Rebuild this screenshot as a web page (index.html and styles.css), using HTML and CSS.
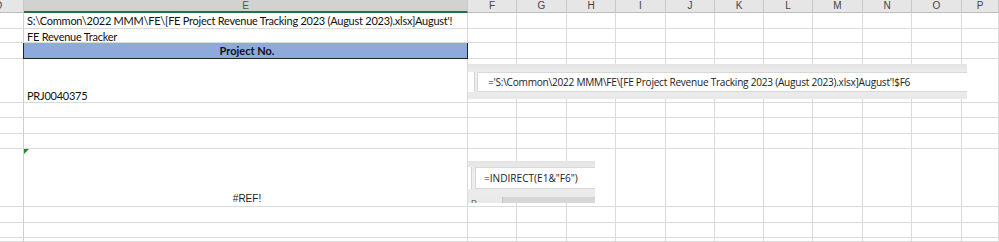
FILE: index.html
```html
<!DOCTYPE html>
<html lang="en">
<head>
  <meta charset="UTF-8">
  <meta name="viewport" content="width=device-width, initial-scale=1.0">
  <title>FE Revenue Tracker</title>
  <link rel="stylesheet" href="styles.css">
</head>
<body>
  <div class="sheet">

    <!-- column headers -->
    <div class="c h first">D</div><div class="c h sel">E</div><div class="c h">F</div><div class="c h">G</div><div class="c h">H</div><div class="c h">I</div><div class="c h">J</div><div class="c h">K</div><div class="c h">L</div><div class="c h">M</div><div class="c h">N</div><div class="c h">O</div><div class="c h">P</div>

    <!-- row 1 -->
    <div class="c"></div><div class="c e txt">S:\Common\2022 MMM\FE\[FE Project Revenue Tracking 2023 (August 2023).xlsx]August'!</div><div class="c"></div><div class="c"></div><div class="c"></div><div class="c"></div><div class="c"></div><div class="c"></div><div class="c"></div><div class="c"></div><div class="c"></div><div class="c"></div><div class="c"></div>

    <!-- row 2 -->
    <div class="c"></div><div class="c e txt">FE Revenue Tracker</div><div class="c"></div><div class="c"></div><div class="c"></div><div class="c"></div><div class="c"></div><div class="c"></div><div class="c"></div><div class="c"></div><div class="c"></div><div class="c"></div><div class="c"></div>

    <!-- row 3 -->
    <div class="c"></div><div class="c e txt title">Project No.</div><div class="c"></div><div class="c"></div><div class="c"></div><div class="c"></div><div class="c"></div><div class="c"></div><div class="c"></div><div class="c"></div><div class="c"></div><div class="c"></div><div class="c"></div>

    <!-- row 4 -->
    <div class="c"></div><div class="c e txt bottom">PRJ0040375</div><div class="c"></div><div class="c"></div><div class="c"></div><div class="c"></div><div class="c"></div><div class="c"></div><div class="c"></div><div class="c"></div><div class="c"></div><div class="c"></div><div class="c"></div>

    <!-- rows 5-7 -->
    <div class="c"></div><div class="c e"></div><div class="c"></div><div class="c"></div><div class="c"></div><div class="c"></div><div class="c"></div><div class="c"></div><div class="c"></div><div class="c"></div><div class="c"></div><div class="c"></div><div class="c"></div>
    <div class="c"></div><div class="c e"></div><div class="c"></div><div class="c"></div><div class="c"></div><div class="c"></div><div class="c"></div><div class="c"></div><div class="c"></div><div class="c"></div><div class="c"></div><div class="c"></div><div class="c"></div>
    <div class="c"></div><div class="c e"></div><div class="c"></div><div class="c"></div><div class="c"></div><div class="c"></div><div class="c"></div><div class="c"></div><div class="c"></div><div class="c"></div><div class="c"></div><div class="c"></div><div class="c"></div>

    <!-- row 8 -->
    <div class="c"></div><div class="c e txt bottom center err"><span class="flag"></span>#REF!</div><div class="c"></div><div class="c"></div><div class="c"></div><div class="c"></div><div class="c"></div><div class="c"></div><div class="c"></div><div class="c"></div><div class="c"></div><div class="c"></div><div class="c"></div>

    <!-- rows 9-11 -->
    <div class="c"></div><div class="c e"></div><div class="c"></div><div class="c"></div><div class="c"></div><div class="c"></div><div class="c"></div><div class="c"></div><div class="c"></div><div class="c"></div><div class="c"></div><div class="c"></div><div class="c"></div>
    <div class="c"></div><div class="c e"></div><div class="c"></div><div class="c"></div><div class="c"></div><div class="c"></div><div class="c"></div><div class="c"></div><div class="c"></div><div class="c"></div><div class="c"></div><div class="c"></div><div class="c"></div>
    <div class="c"></div><div class="c e"></div><div class="c"></div><div class="c"></div><div class="c"></div><div class="c"></div><div class="c"></div><div class="c"></div><div class="c"></div><div class="c"></div><div class="c"></div><div class="c"></div><div class="c"></div>

    <!-- pasted formula bar snippets -->
    <div class="fbar fbar-long">
      <div class="namebox"></div>
      <div class="formula">='S:\Common\2022 MMM\FE\[FE Project Revenue Tracking 2023 (August 2023).xlsx]August'!$F6</div>
    </div>

    <div class="fbar fbar-short">
      <div class="namebox"></div>
      <div class="formula">=INDIRECT(E1&amp;"F6")</div>
      <div class="fbar-foot"><span class="col-d">D</span><span class="scroll"></span></div>
    </div>

  </div>
</body>
</html>
```

FILE: styles.css
```css
body {
  margin: 0;
  background-color: white;
  font-family: Lato, "Liberation Sans", sans-serif;
  overflow: hidden;
}

.sheet {
  position: relative;
  display: grid;
  grid-template-columns: 24px 444px 49px 50px 49px 50px 49px 49px 49px 50px 49px 50px 37px;
  grid-template-rows: 13px 16px 14px 16px 44px 15px 16px 15px 58px 16px 15px 4px;
  width: 999px;
  height: 242px;
}

.c {
  box-sizing: border-box;
  border-right: 1px solid #dadada;
  border-bottom: 1px solid #dadada;
  overflow: hidden;
  white-space: nowrap;
}

/* column headers */
.h {
  background-color: #e6e6e6;
  border-right-color: #c8c8c8;
  border-bottom-color: #bdbdbd;
  color: #444;
  font-family: "Liberation Sans", Arial, sans-serif;
  font-size: 10px;
  line-height: 12px;
  text-align: center;
}

.h.first {
  text-align: left;
  text-indent: -5px;
}

.h.sel {
  background-color: #d2d2d2;
  border-bottom: 2px solid #217346;
  color: #217346;
}

.e {
  border-left: 1px solid #d0d0d0;
  margin-left: -1px;
}

.txt {
  position: relative;
  padding-left: 3px;
  font-size: 11px;
  letter-spacing: -0.25px;
  line-height: 15px;
  color: #111;
}

.title {
  background-color: #8ea9db;
  border: 1px solid #222;
  border-top: none;
  font-weight: bold;
  text-align: center;
  letter-spacing: 0;
  line-height: 15px;
}

.bottom {
  display: flex;
  align-items: flex-end;
  line-height: 13px;
  padding-bottom: 0;
}

.center {
  justify-content: center;
}

.err {
  font-family: "Liberation Sans", Arial, sans-serif;
  font-size: 10px;
  letter-spacing: 0;
  line-height: 12px;
  padding-bottom: 1px;
  color: #222;
}

.flag {
  position: absolute;
  top: 0;
  left: 0;
  width: 0;
  height: 0;
  border-top: 5px solid #1e8a2e;
  border-right: 5px solid transparent;
}

/* formula bar screenshots laid over the grid */
.fbar {
  position: absolute;
  left: 468px;
  background: linear-gradient(#e4e4e4, #eeeeee 25%, #e9e9e9);
  font-family: "Open Sans", "Noto Sans", sans-serif;
  color: #222;
}

.fbar-long {
  top: 64px;
  width: 499px;
  height: 35px;
}

.fbar-short {
  top: 161px;
  width: 127px;
  height: 42px;
}

.namebox {
  position: absolute;
  left: 0;
  top: 8px;
  width: 6px;
  height: 20px;
  background-color: white;
  border-right: 1px solid #d4d4d4;
}

.fbar-short .namebox {
  top: 6px;
  width: 3px;
  height: 22px;
}

.formula {
  position: absolute;
  left: 9px;
  right: 0;
  top: 8px;
  height: 20px;
  box-sizing: border-box;
  padding-left: 10px;
  background-color: white;
  border: 1px solid #d8d8d8;
  border-right: none;
  font-size: 10.1px;
  line-height: 18px;
  white-space: nowrap;
  overflow: hidden;
}

.fbar-long .formula {
  letter-spacing: -0.25px;
}

.fbar-short .formula {
  left: 7px;
  top: 6px;
  height: 22px;
  padding-left: 8px;
  line-height: 20px;
}

.fbar-foot {
  position: absolute;
  left: 0;
  right: 0;
  bottom: 0;
  height: 6px;
  display: flex;
  overflow: hidden;
}

.col-d {
  width: 31px;
  padding-left: 3px;
  font-size: 8px;
  line-height: 10px;
  color: #444;
}

.scroll {
  flex: 1;
  background-color: #d6d6d6;
  border-left: 1px solid #c4c4c4;
}
```
